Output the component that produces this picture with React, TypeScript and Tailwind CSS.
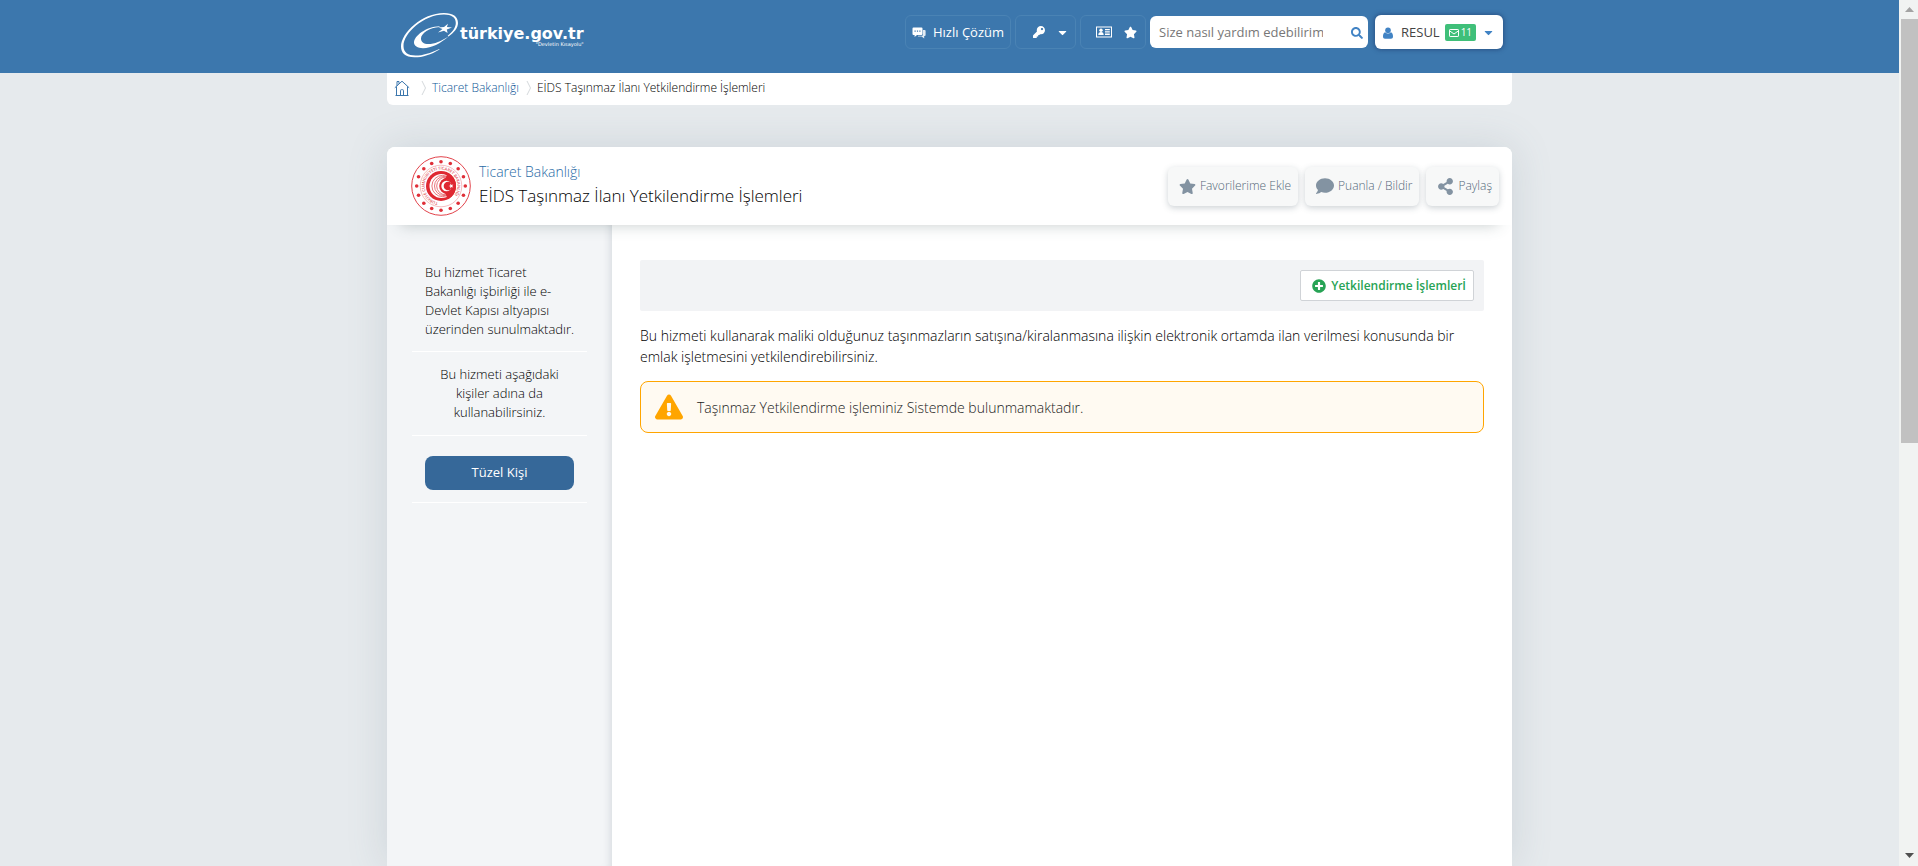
import React from "react";
import {
  FaCaretDown,
  FaComment,
  FaExclamationTriangle,
  FaKey,
  FaPlusCircle,
  FaSearch,
  FaShareAlt,
  FaStar,
} from "react-icons/fa";

function BrandMark() {
  return (
    <svg viewBox="0 0 60 47" className="h-[47px] w-[60px] shrink-0" fill="#fff" aria-hidden="true">
      <path d="M39.5 37.4 C31 42.5 23 45.3 14.5 45.3 C5 45.3 1 41 1 34.6 C1 21 22 1 44 1 C53 1 58 4.500 58 11 C58 16 54 20.500 48.500 24.500 L47.700 23.800 C52.500 20 55.800 15.500 55.800 11 C55.800 5.500 51.500 2.600 44 2.600 C23.500 2.600 3.500 21.500 3.500 34 C3.500 40.500 8 43.500 15.500 43.500 C23 43.500 30.500 41 39.200 36.900 Z" />
      <path d="M39.500 14.200 C26 14.500 14 24 14 30.600 C14 34 17.500 36.200 23 36.200 C31.500 36.200 40.500 31.500 49 24 C41 29.500 34.500 32 28.500 32 C23.500 32 21 30 21 26.500 C21 21.500 29.500 15.500 39.500 15 Z" />
      <path d="M48 11.700 L46.900 15.100 L52 15.400 L46.800 17.500 L47.600 21 L44 18.800 L38 20.500 L42.500 17 L38.500 15.500 L44 15 Z" />
    </svg>
  );
}

function ChatIcon() {
  return (
    <svg viewBox="0 0 14 12" className="h-3 w-[14px]" aria-hidden="true">
      <path d="M11 3h1.600q1 0 1 1v4q0 1-1 1h-.4v2.600L9.600 9.500H6V8.800h4q1 0 1-1z" fill="#fff" fillOpacity=".85" />
      <path d="M1.500.5h8q1 0 1 1v5.500q0 1-1 1H5L2.600 10V8H1.500q-1 0-1-1V1.500q0-1 1-1z" fill="#fff" />
      <path d="M2.500 3.600h1.200v1.200H2.500zM4.900 3.600h1.200v1.200H4.900zM7.300 3.600h1.200v1.200H7.300z" fill="#3c77ad" />
    </svg>
  );
}

function IdCardIcon() {
  return (
    <svg viewBox="0 0 16 12" className="h-3 w-4" fill="#fff" aria-hidden="true">
      <path fillRule="evenodd" d="M0 .5h16v11H0zM1 1.500v9h14v-9z" />
      <circle cx="5" cy="4.300" r="1.700" />
      <path d="M2.300 9c0-2 1-3.100 2.700-3.100S7.700 7 7.700 9zM9 3h4.800v1.300H9zM9 5.300h4.800v1.300H9zM9 7.600h4.800v1.300H9z" />
    </svg>
  );
}

function UserIcon() {
  return (
    <svg viewBox="0 0 10 12" className="h-3 w-[10px]" fill="#4183c4" aria-hidden="true">
      <circle cx="5" cy="3.200" r="2.800" />
      <path d="M2.200 5.200C.6 5.600 0 7.400 0 9.600 0 11 .8 11.800 2 11.800h6c1.200 0 2-.8 2-2.200 0-2.200-.6-4-2.200-4.400a3.900 3.900 0 0 1-5.600 0z" />
    </svg>
  );
}

function MailIcon() {
  return (
    <svg viewBox="0 0 10 8" className="h-2 w-[10px]" fill="none" stroke="#fff" aria-hidden="true">
      <rect x=".5" y=".5" width="9" height="7" rx=".6" />
      <path d="M.8 2l4.200 3 4.200-3" />
    </svg>
  );
}

function HomeIcon() {
  return (
    <svg viewBox="0 0 16 16" className="h-4 w-4" fill="none" stroke="#3c77ad" aria-hidden="true">
      <path d="M.8 7.800 8 1.200l7.200 6.600M2.500 6.500v9M13.500 6.500v9M1.500 15.500h13M3 6V1.500h2v2.300M6.500 15.500v-5q0-.8.800-.8h1.400q.8 0 .8.800v5" />
    </svg>
  );
}

function MinistrySeal() {
  const dots = Array.from({ length: 16 }, (_, i) => (i * Math.PI) / 8);
  return (
    <svg viewBox="-30 -30 60 60" className="h-[60px] w-[60px] shrink-0" aria-hidden="true">
      <circle r="29.300" fill="#fff" stroke="#e2434b" strokeWidth="1" />
      {dots.map((a) => (
        <circle key={a} cx={24.300 * Math.cos(a)} cy={24.300 * Math.sin(a)} r="1.800" fill="#df2f38" />
      ))}
      <circle r="20.800" fill="none" stroke="#ee9297" strokeWidth=".6" />
      <defs>
        <path id="seal-ring" d="M0 16.400A16.400 16.400 0 1 1 .1 16.400" />
      </defs>
      <text fill="#e2545c" fontSize="4" fontFamily="Open Sans, sans-serif" fontWeight="600">
        <textPath href="#seal-ring" startOffset="3">
          TÜRKİYE CUMHURİYETİ TİCARET BAKANLIĞI
        </textPath>
      </text>
      <circle r="15" fill="#df2832" />
      <circle cx=".5" r="12" fill="#fff" />
      <g fill="none" stroke="#e6666d" strokeWidth=".9">
        <circle cx="1.500" r="10.600" />
        <circle cx="3" r="9.500" />
        <circle cx="4.500" r="8.800" />
      </g>
      <path d="M15 0A15 15 0 0 1 7 13.200L4 7A9 9 0 0 1 4 -7L7 -13.200A15 15 0 0 1 15 0z" fill="#df2832" />
      <circle cx="6.500" r="8.300" fill="#df2832" />
      <circle cx="5.500" r="5.200" fill="#fff" />
      <circle cx="7" r="4.300" fill="#df2832" />
      <path d="M7.500 0l1.800-.6.1-1.900 1.100 1.500 1.800-.5L11.200 0l1.100 1.500-1.800-.5-1.100 1.500-.1-1.900z" fill="#fff" />
    </svg>
  );
}

function Separator() {
  return (
    <svg viewBox="0 0 6 16" className="h-4 w-[6px]" fill="none" stroke="#d5d9dc" aria-hidden="true">
      <path d="M1 1l3.500 7L1 15" />
    </svg>
  );
}

const navBox =
  "flex h-[34px] items-center rounded-md border border-[#4a83b4] text-[13px] text-white";

function TopBar() {
  return (
    <header className="flex h-[73px] shrink-0 justify-center bg-[#3c77ad]">
      <div className="flex w-full max-w-[1125px] items-start justify-between pr-[9px] pl-[13px]">
        <a href="#" className="flex pt-3 text-white">
          <BrandMark />
          <span className="flex flex-col pt-[14px] font-['DejaVu_Sans']">
            <span className="text-[16px] leading-4 font-bold">türkiye.gov.tr</span>
            <span className="self-end text-[5px] leading-[5px]">"Devletin Kısayolu"</span>
          </span>
        </a>
        <nav className="flex items-center gap-1 pt-[15px]">
          <button type="button" className={navBox + " gap-[7px] px-[6px] pt-px"}>
            <ChatIcon />
            Hızlı Çözüm
          </button>
          <button type="button" aria-label="Giriş" className={navBox + " w-[61px] justify-end gap-[11px] pr-[6px]"}>
            <FaKey size={12} />
            <FaCaretDown size={13} />
          </button>
          <div className={navBox + " w-[66px] justify-end gap-3 pr-2"}>
            <button type="button" aria-label="Kimlik">
              <IdCardIcon />
            </button>
            <button type="button" aria-label="Favoriler">
              <FaStar size={13} />
            </button>
          </div>
          <form className="flex h-8 w-[218px] items-center justify-between rounded-md bg-white pt-px pr-[5px] pl-[9px]">
            <input
              type="text"
              aria-label="Arama"
              placeholder="Size nasıl yardım edebilirim?"
              className="w-[164px] text-[13px] text-[#555] outline-none placeholder:text-[#777]"
            />
            <button type="button" aria-label="Ara" className="text-[#4183c4]">
              <FaSearch size={12} />
            </button>
          </form>
          <button
            type="button"
            className="ml-[3px] flex h-[34px] w-[128px] items-center rounded-md bg-white pt-px pl-2 text-[13px] text-[#444] shadow-[0_0_4px_1px_rgba(30,60,110,0.6)]"
          >
            <UserIcon />
            <span className="ml-2">RESUL</span>
            <span className="ml-[5px] flex h-[17px] items-center gap-[2px] rounded-xs bg-[#3fbf79] px-1 text-[10px] text-white">
              <MailIcon />
              11
            </span>
            <FaCaretDown size={13} className="ml-[6px] text-[#4183c4]" />
          </button>
        </nav>
      </div>
    </header>
  );
}

function ActionButton({ icon, label }: { icon: React.ReactNode; label: string }) {
  return (
    <button
      type="button"
      className="flex h-[39px] items-center gap-1 rounded-md bg-[#f7f8f8] pr-[7px] pl-[11px] text-[12px] font-light text-[#8393a2] shadow-[0_2px_6px_rgba(60,80,90,0.25)]"
    >
      {icon}
      <span className="text-[#55687a]">{label}</span>
    </button>
  );
}

function Sidebar() {
  return (
    <aside className="w-[225px] shrink-0 bg-[#f3f5f7] px-[25px] pt-[38px] text-[13px] leading-[19px] font-light text-black shadow-[inset_-8px_0_8px_-7px_rgba(80,95,110,0.2)]">
      <p className="border-b border-white pr-2 pl-[13px] pb-[12px]">
        Bu hizmet Ticaret Bakanlığı işbirliği ile e-Devlet Kapısı altyapısı üzerinden sunulmaktadır.
      </p>
      <p className="border-b border-white px-[13px] pt-[13px] pb-[13px] text-center">
        Bu hizmeti aşağıdaki kişiler adına da kullanabilirsiniz.
      </p>
      <div className="border-b border-white px-[13px] pt-5 pb-3">
        <button type="button" className="h-[34px] w-full rounded-lg bg-[#366899] pb-[2px] font-normal text-white">
          Tüzel Kişi
        </button>
      </div>
    </aside>
  );
}

function ScrollTrack() {
  return (
    <div className="flex w-[19px] shrink-0 flex-col items-center bg-[#f1f3f2] pl-[2px]" aria-hidden="true">
      <svg viewBox="0 0 9 5" className="mt-[7px] h-[5px] w-[9px]" fill="#a3a3a3">
        <path d="M0 5 4.500 0 9 5z" />
      </svg>
      <div className="mt-[7px] h-[424px] w-full bg-[#c1c1c1]" />
      <svg viewBox="0 0 9 5" className="mt-auto mb-2 h-[5px] w-[9px]" fill="#505050">
        <path d="M0 0 4.500 5 9 0z" />
      </svg>
    </div>
  );
}

export default function App() {
  return (
    <div className="flex min-h-screen bg-[#e6eaed] font-['Open_Sans',sans-serif]">
      <div className="flex flex-1 flex-col overflow-hidden">
        <TopBar />
        <div className="mx-auto flex w-full max-w-[1125px] flex-1 flex-col">
          <nav className="flex h-8 items-center rounded-b-md bg-white pb-[2px] pl-[7px] text-[12px] font-light">
            <a href="#" aria-label="Ana sayfa">
              <HomeIcon />
            </a>
            <span className="mr-[5px] ml-[11px]">
              <Separator />
            </span>
            <a href="#" className="text-[#0f5797]">
              Ticaret Bakanlığı
            </a>
            <span className="mr-[5px] ml-[7px]">
              <Separator />
            </span>
            <span className="text-black">EİDS Taşınmaz İlanı Yetkilendirme İşlemleri</span>
          </nav>

          <main className="mt-[42px] flex flex-1 flex-col rounded-t-lg bg-white shadow-[0_0_40px_rgba(90,110,125,0.18)]">
            <div className="relative flex h-[78px] items-center rounded-t-lg bg-white pr-[13px] pl-6 shadow-[0_14px_14px_-14px_rgba(70,90,90,0.3)]">
              <MinistrySeal />
              <div className="ml-2 flex-1 pb-1 font-light">
                <a href="#" className="block text-[14px] leading-6 text-[#2a6ba6]">
                  Ticaret Bakanlığı
                </a>
                <h1 className="text-[17px] leading-6 text-black">
                  EİDS Taşınmaz İlanı Yetkilendirme İşlemleri
                </h1>
              </div>
              <div className="flex gap-[7px]">
                <ActionButton icon={<FaStar size={17} />} label="Favorilerime Ekle" />
                <ActionButton icon={<FaComment size={18} />} label="Puanla / Bildir" />
                <ActionButton icon={<FaShareAlt size={17} />} label="Paylaş" />
              </div>
            </div>

            <div className="flex flex-1">
              <Sidebar />
              <section className="min-w-0 flex-1 px-7 pt-[35px] text-[14px] leading-[21px] font-light">
                <div className="flex h-[51px] items-center justify-end rounded-xs bg-[#f2f3f5] pr-[10px]">
                  <a
                    href="#"
                    className="flex h-[31px] items-center gap-[5px] rounded-xs border border-[#d0d3d7] bg-white pr-[7px] pl-[11px] text-[12px] font-semibold text-[#27a355]"
                  >
                    <FaPlusCircle size={14} />
                    Yetkilendirme İşlemlerİ
                  </a>
                </div>
                <p className="pt-[14px] pb-[14px] text-black">
                  Bu hizmeti kullanarak maliki olduğunuz taşınmazların satışına/kiralanmasına ilişkin elektronik
                  ortamda ilan verilmesi konusunda bir emlak işletmesini yetkilendirebilirsiniz.
                </p>
                <div
                  role="alert"
                  className="flex h-[52px] items-center gap-[14px] rounded-lg border border-[#ffa500] bg-[#fffaf2] px-[14px] text-[#222]"
                >
                  <FaExclamationTriangle size={28} className="text-[#ffa500]" />
                  Taşınmaz Yetkilendirme işleminiz Sistemde bulunmamaktadır.
                </div>
              </section>
            </div>
          </main>
        </div>
      </div>
      <ScrollTrack />
    </div>
  );
}
